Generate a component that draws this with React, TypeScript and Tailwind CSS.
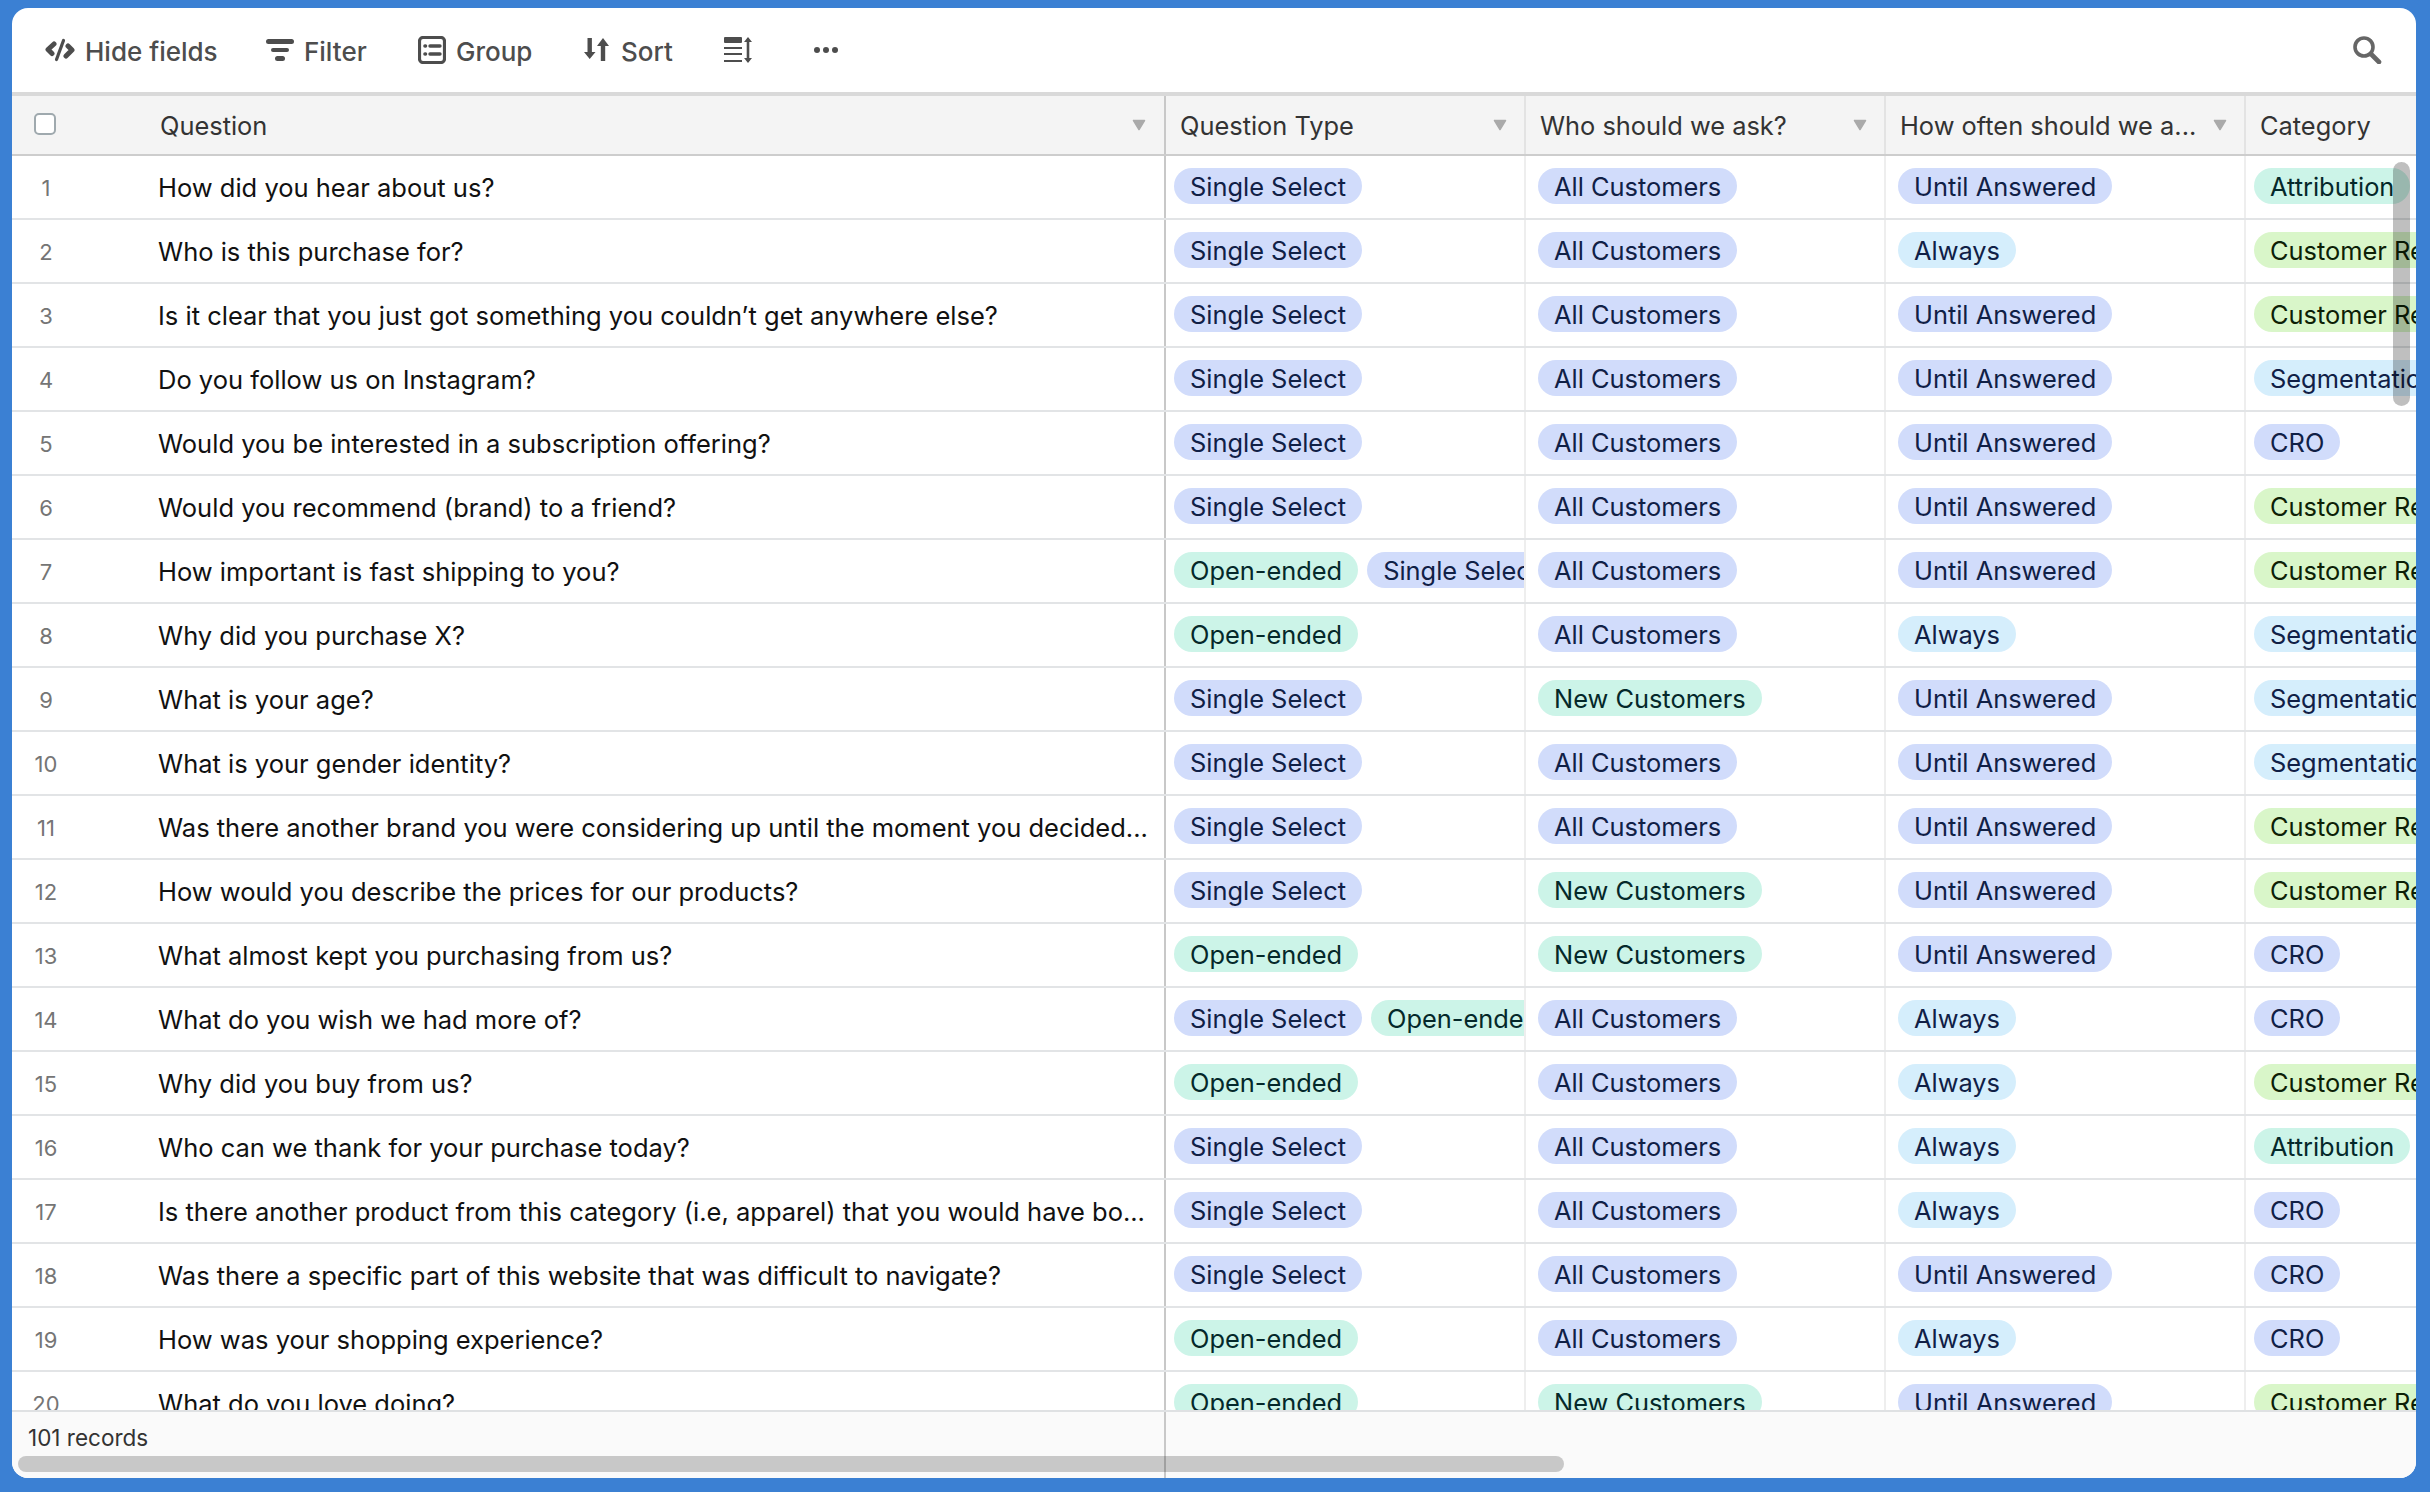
import React from "react"

type Row = { q: string; types: string[]; who: string; often: string; cat: string }

const S = "Single Select"
const O = "Open-ended"
const A = "All Customers"
const N = "New Customers"
const U = "Until Answered"
const W = "Always"
const CR = "Customer Research"
const SG = "Segmentation"
const AT = "Attribution"
const C = "CRO"

const rows: Row[] = [
	{ q: "How did you hear about us?", types: [S], who: A, often: U, cat: AT },
	{ q: "Who is this purchase for?", types: [S], who: A, often: W, cat: CR },
	{ q: "Is it clear that you just got something you couldn’t get anywhere else?", types: [S], who: A, often: U, cat: CR },
	{ q: "Do you follow us on Instagram?", types: [S], who: A, often: U, cat: SG },
	{ q: "Would you be interested in a subscription offering?", types: [S], who: A, often: U, cat: C },
	{ q: "Would you recommend (brand) to a friend?", types: [S], who: A, often: U, cat: CR },
	{ q: "How important is fast shipping to you?", types: [O, S], who: A, often: U, cat: CR },
	{ q: "Why did you purchase X?", types: [O], who: A, often: W, cat: SG },
	{ q: "What is your age?", types: [S], who: N, often: U, cat: SG },
	{ q: "What is your gender identity?", types: [S], who: A, often: U, cat: SG },
	{ q: "Was there another brand you were considering up until the moment you decided...", types: [S], who: A, often: U, cat: CR },
	{ q: "How would you describe the prices for our products?", types: [S], who: N, often: U, cat: CR },
	{ q: "What almost kept you purchasing from us?", types: [O], who: N, often: U, cat: C },
	{ q: "What do you wish we had more of?", types: [S, O], who: A, often: W, cat: C },
	{ q: "Why did you buy from us?", types: [O], who: A, often: W, cat: CR },
	{ q: "Who can we thank for your purchase today?", types: [S], who: A, often: W, cat: AT },
	{ q: "Is there another product from this category (i.e, apparel) that you would have bo...", types: [S], who: A, often: W, cat: C },
	{ q: "Was there a specific part of this website that was difficult to navigate?", types: [S], who: A, often: U, cat: C },
	{ q: "How was your shopping experience?", types: [O], who: A, often: W, cat: C },
	{ q: "What do you love doing?", types: [O], who: N, often: U, cat: CR },
]

const pillColor = (label: string) => {
	switch (label) {
		case O:
		case N:
		case AT:
			return "bg-[#ccf4e8] text-[#04282a]"
		case W:
		case SG:
			return "bg-[#d5eefc] text-[#102046]"
		case CR:
			return "bg-[#d9f6c9] text-[#0c2006]"
		default:
			return "bg-[#d1dcfb] text-[#102046]"
	}
}

const Pill = ({ label }: { label: string }) => (
	<span className={`mb-[2px] h-9 shrink-0 rounded-full px-4 pt-px text-[25.4px] leading-9 whitespace-nowrap ${pillColor(label)}`}>
		{label}
	</span>
)

const Arrow = () => (
	<svg width="14" height="12" viewBox="0 0 14 12" className="shrink-0">
		<path d="M1.5 1.5h11L7 10.5z" fill="#aaaaaa" stroke="#aaaaaa" strokeWidth="1.5" strokeLinejoin="round" />
	</svg>
)

const HeadCell = ({ label }: { label: string }) => (
	<div className="flex w-[360px] shrink-0 items-center justify-between border-r-2 border-[#e3e3e3] pr-[17px] pl-[14px]">
		<span className="pt-[2px] whitespace-nowrap">{label}</span>
		<Arrow />
	</div>
)

const Tool = ({ icon, label, className }: { icon: React.ReactNode; label: string; className: string }) => (
	<div className={`flex items-center gap-[10px] ${className}`}>
		{icon}
		<span className="pt-[2px]">{label}</span>
	</div>
)

const HideIcon = () => (
	<svg width="30" height="24" viewBox="0 0 30 24" fill="none" stroke="#4d4d4d" strokeLinecap="round" strokeLinejoin="round">
		<path d="M9 6 3 11.500l4 4" strokeWidth="5" />
		<path d="M21 18l6-6-4-4" strokeWidth="5" />
		<path d="M18.500 2.500 11.500 21.500" strokeWidth="3.200" />
	</svg>
)

const FilterIcon = () => (
	<svg width="28" height="24" viewBox="0 0 28 24" fill="#4d4d4d">
		<rect x="0" y="1" width="28" height="5" rx="2.5" />
		<rect x="5" y="10" width="18" height="4" rx="2" />
		<rect x="9" y="18" width="10" height="5" rx="2.5" />
	</svg>
)

const GroupIcon = () => (
	<svg width="28" height="28" viewBox="0 0 28 28" fill="none" stroke="#4d4d4d">
		<rect x="1.500" y="1.500" width="25" height="25" rx="3.500" strokeWidth="3.200" />
		<path d="M12 10h10M12 18h10" strokeWidth="3.400" strokeLinecap="round" />
		<path d="M7 10h.5M7 18h.5" strokeWidth="3.600" strokeLinecap="round" />
	</svg>
)

const SortIcon = () => (
	<svg width="25" height="26" viewBox="0 0 25 26" fill="#4d4d4d">
		<path d="M3.500 1h4.400v14H11.500L5.700 22 0 15h3.500z" />
		<path d="M19 1l6 8h-3.800v15h-4.400V9H13z" />
	</svg>
)

const HeightIcon = () => (
	<div className="relative h-[26px] w-[28px]">
		<svg width="19" height="26" viewBox="0 0 19 26" fill="#4d4d4d">
			<rect x="0" y="0" width="18" height="6" rx="1" />
			<rect x="0" y="10" width="18" height="2" />
			<rect x="0" y="16" width="18" height="2" />
			<rect x="0" y="23" width="18" height="2" />
		</svg>
		<svg width="8" height="26" viewBox="0 0 8 26" fill="#4d4d4d" className="absolute top-0 right-0">
			<path d="M4 0l4 5H5.300v16H8l-4 5-4-5h2.700V5H0z" />
		</svg>
	</div>
)

const SearchIcon = () => (
	<svg width="30" height="28" viewBox="0 0 30 28" fill="none" stroke="#666666" strokeLinecap="round">
		<circle cx="12" cy="11" r="9" strokeWidth="3.600" />
		<path d="M19 18l8 8" strokeWidth="4.600" />
	</svg>
)

export default function App() {
	return (
		<div className="flex h-[1492px] w-[2430px] bg-[#3b80d3] pt-2 pr-[14px] pb-[14px] pl-3 font-['Inter',sans-serif]">
			<div className="relative flex min-w-0 flex-1 flex-col overflow-hidden rounded-2xl bg-white">
				{/* toolbar */}
				<div className="flex h-[84px] shrink-0 items-center pr-[34px] pl-[33px] text-[26px] font-medium text-[#4d4d4d]">
					<Tool icon={<HideIcon />} label="Hide fields" className="w-[221px]" />
					<Tool icon={<FilterIcon />} label="Filter" className="w-[152px]" />
					<Tool icon={<GroupIcon />} label="Group" className="w-[166px]" />
					<Tool icon={<SortIcon />} label="Sort" className="w-[140px] gap-[12px]" />
					<div className="w-[90px]">
						<HeightIcon />
					</div>
					<svg width="24" height="6" viewBox="0 0 24 6" fill="#4d4d4d">
						<circle cx="3" cy="3" r="3" />
						<circle cx="12" cy="3" r="3" />
						<circle cx="21" cy="3" r="3" />
					</svg>
					<div className="ml-auto">
						<SearchIcon />
					</div>
				</div>

				{/* header */}
				<div className="flex h-[64px] shrink-0 border-t-4 border-b-2 border-t-[#d9d9d9] border-b-[#cdcdcd] bg-[#f4f4f4] text-[25.4px] text-[#333333]">
					<div className="flex w-[1154px] shrink-0 items-center border-r-2 border-[#c8c8c8]">
						<div className="w-[148px] shrink-0 pl-[22px]">
							<div className="mb-[2px] h-[22px] w-[22px] rounded-[5px] border-2 border-[#9fa9ae] bg-white" />
						</div>
						<span className="pt-[2px]">Question</span>
						<div className="ml-auto pr-[18px]">
							<Arrow />
						</div>
					</div>
					<HeadCell label="Question Type" />
					<HeadCell label="Who should we ask?" />
					<HeadCell label="How often should we a..." />
					<div className="flex min-w-0 flex-1 items-center pt-[2px] pl-[14px]">Category</div>
				</div>

				{/* rows */}
				<div className="min-h-0 flex-1 overflow-hidden">
					{rows.map((r, i) => (
						<div key={r.q} className="flex h-[64px] border-b-2 border-[#e2e4e6]">
							<div className="flex w-[1154px] shrink-0 items-center border-r-2 border-[#c8c8c8]">
								<div className="w-[68px] shrink-0 pt-[2px] text-center text-[22px] text-[#757575]">{i + 1}</div>
								<div className="pt-[2px] pl-[78px] text-[25.5px] whitespace-nowrap text-[#111111]">{r.q}</div>
							</div>
							<div className="flex w-[360px] shrink-0 items-center gap-[9px] overflow-hidden border-r-2 border-[#eeeeee] pl-2">
								{r.types.map((t) => (
									<Pill key={t} label={t} />
								))}
							</div>
							<div className="flex w-[360px] shrink-0 items-center overflow-hidden border-r-2 border-[#eeeeee] pl-3">
								<Pill label={r.who} />
							</div>
							<div className="flex w-[360px] shrink-0 items-center overflow-hidden border-r-2 border-[#eeeeee] pl-3">
								<Pill label={r.often} />
							</div>
							<div className="flex min-w-0 flex-1 items-center overflow-hidden pl-[8px]">
								<Pill label={r.cat} />
							</div>
						</div>
					))}
				</div>

				{/* footer */}
				<div className="flex h-[68px] shrink-0 border-t-2 border-[#dfe1e3] bg-[#fafafa]">
					<div className="w-[1154px] shrink-0 border-r-2 border-[#c8c8c8] pt-3 pl-4 text-[22.5px] leading-7 text-[#333333]">
						101 records
					</div>
				</div>

				{/* overlay scrollbars */}
				<div className="absolute top-[154px] right-[6px] h-[244px] w-[17px] rounded-full bg-black/25" />
				<div className="absolute bottom-[6px] left-[6px] h-4 w-[1546px] rounded-full bg-black/20" />
			</div>
		</div>
	)
}
